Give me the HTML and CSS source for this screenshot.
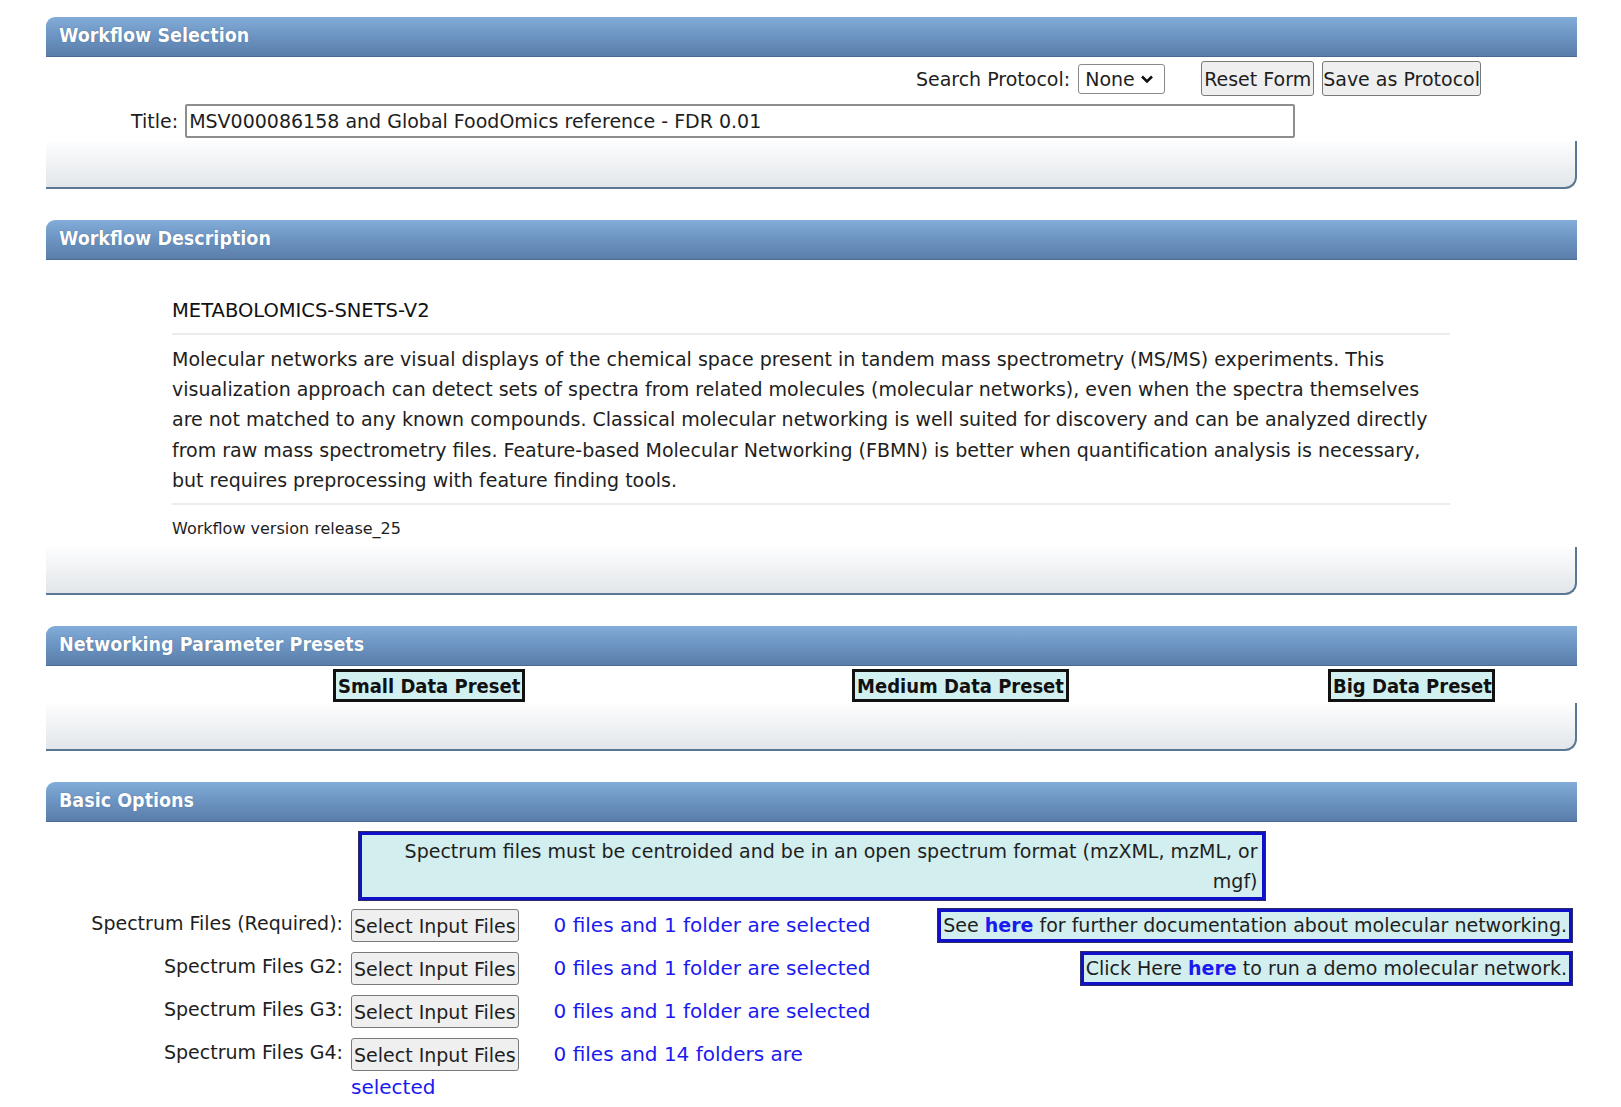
FILE: index.html
```html
<!DOCTYPE html>
<html lang="en">
<head>
<meta charset="utf-8">
<title>Workflow</title>
<link rel="stylesheet" href="styles.css">
</head>
<body>
<div class="page">

  <section class="panel">
    <div class="panel-head">Workflow Selection</div>
    <div class="panel-body sel-body">
      <div class="proto-row">
        <span class="proto-label">Search Protocol:</span>
        <span class="select"><span>None</span><svg width="14" height="10" viewBox="0 0 14 10"><path d="M2 2.5 L7 7.5 L12 2.5" fill="none" stroke="#111" stroke-width="2.6"/></svg></span>
        <button class="btn reset">Reset Form</button>
        <button class="btn save">Save as Protocol</button>
      </div>
      <div class="title-row">
        <span class="title-label">Title:</span>
        <input class="title-input" type="text" value="MSV000086158 and Global FoodOmics reference - FDR 0.01">
      </div>
    </div>
    <div class="panel-foot"></div>
  </section>

  <section class="panel">
    <div class="panel-head">Workflow Description</div>
    <div class="panel-body desc-body">
      <div class="desc-title">METABOLOMICS-SNETS-V2</div>
      <hr class="rule">
      <p class="desc-text">Molecular networks are visual displays of the chemical space present in tandem mass spectrometry (MS/MS) experiments. This visualization approach can detect sets of spectra from related molecules (molecular networks), even when the spectra themselves are not matched to any known compounds. Classical molecular networking is well suited for discovery and can be analyzed directly from raw mass spectrometry files. Feature-based Molecular Networking (FBMN) is better when quantification analysis is necessary, but requires preprocessing with feature finding tools.</p>
      <hr class="rule">
      <div class="desc-version">Workflow version release_25</div>
    </div>
    <div class="panel-foot"></div>
  </section>

  <section class="panel">
    <div class="panel-head">Networking Parameter Presets</div>
    <div class="panel-body preset-body">
      <button class="preset small">Small Data Preset</button>
      <button class="preset medium">Medium Data Preset</button>
      <button class="preset big">Big Data Preset</button>
    </div>
    <div class="panel-foot"></div>
  </section>

  <section class="panel">
    <div class="panel-head">Basic Options</div>
    <div class="panel-body basic-body">
      <div class="notice">Spectrum files must be centroided and be in an open spectrum format (mzXML, mzML, or<br>mgf)</div>
      <div class="file-grid">
        <div class="f-label">Spectrum Files (Required):</div>
        <div class="f-cell"><button class="btn file-btn">Select Input Files</button><span class="f-status">0 files and 1 folder are selected</span></div>
        <div class="f-right"><span class="linkbox">See <b class="here">here</b> for further documentation about molecular networking.</span></div>

        <div class="f-label">Spectrum Files G2:</div>
        <div class="f-cell"><button class="btn file-btn">Select Input Files</button><span class="f-status">0 files and 1 folder are selected</span></div>
        <div class="f-right"><span class="linkbox">Click Here <b class="here">here</b> to run a demo molecular network.</span></div>

        <div class="f-label">Spectrum Files G3:</div>
        <div class="f-cell"><button class="btn file-btn">Select Input Files</button><span class="f-status">0 files and 1 folder are selected</span></div>
        <div class="f-right"></div>

        <div class="f-label">Spectrum Files G4:</div>
        <div class="f-cell"><button class="btn file-btn">Select Input Files</button><span class="f-status">0 files and 14 folders are</span> <span class="f-status">selected</span></div>
        <div class="f-right"></div>
      </div>
    </div>
  </section>

</div>
</body>
</html>
```
FILE: styles.css
```css
* { box-sizing: border-box; }

body {
  margin: 0;
  background: #ffffff;
  font-family: "DejaVu Sans", "Liberation Sans", sans-serif;
  font-size: 19px;
  color: #1e1e1e;
}

.page {
  width: 1531px;
  margin-left: 46px;
  padding-top: 17px;
}

.panel + .panel { margin-top: 31px; }

.panel-head {
  height: 40px;
  background: linear-gradient(#82acd9, #6a91bf 55%, #5a7eaa);
  border-bottom: 1px solid #4a6a93;
  border-top-left-radius: 9px;
  color: #ffffff;
  font-family: "DejaVu Sans Condensed", "DejaVu Sans", sans-serif;
  font-weight: bold;
  font-size: 19.5px;
  line-height: 38px;
  padding-left: 13px;
  text-shadow: 0 0 1px #3a5a82;
}

.panel-body { background: #ffffff; }

.panel-foot {
  height: 48px;
  background: linear-gradient(#fdfdfe, #e2e6ea);
  border-right: 2px solid #5a7794;
  border-bottom: 2px solid #5a7794;
  border-bottom-right-radius: 12px;
}

/* Section 1 */
.sel-body { padding: 4px 0 3px; }

.proto-row {
  display: flex;
  justify-content: flex-end;
  align-items: center;
  padding-right: 96px;
  height: 35px;
}

.proto-label { margin-right: 8px; }

.select {
  display: inline-flex;
  align-items: center;
  justify-content: space-between;
  width: 87px;
  height: 30px;
  padding: 0 10px 0 6px;
  border: 1px solid #8a8a8a;
  border-radius: 3px;
  background: #ffffff;
  margin-right: 36px;
}

.btn {
  font-family: inherit;
  font-size: 19px;
  line-height: normal;
  color: #1e1e1e;
  background: #efefef;
  border: 1px solid #7a7a7a;
  border-radius: 3px;
  padding: 0 2px;
  height: 35px;
}

.save { padding: 0; }

.reset { margin-right: 8px; }

.title-row {
  display: flex;
  align-items: center;
  margin-top: 8px;
  padding-left: 85px;
  height: 34px;
}

.title-label { margin-right: 7px; }

.title-input {
  width: 1110px;
  height: 34px;
  font-family: inherit;
  font-size: 19px;
  color: #1e1e1e;
  border: 2px solid #8d8d8d;
  border-radius: 2px;
  padding: 0 2px;
}

/* Section 2 */
.desc-body { padding: 37px 127px 8px 126px; }

.desc-title {
  font-size: 19.5px;
  line-height: 28px;
  color: #111111;
}

.rule {
  border: 0;
  height: 2px;
  background: #ececec;
  margin: 8px 0 9px;
}

.desc-text {
  margin: 0 0 7px;
  line-height: 30.2px;
}

.desc-version {
  margin-top: 14px;
  font-size: 16px;
  line-height: 20px;
}

/* Section 3 */
.preset-body {
  display: flex;
  padding-top: 3px;
  height: 37px;
}

.preset {
  font-family: "DejaVu Sans Condensed", "DejaVu Sans", sans-serif;
  font-weight: bold;
  font-size: 20px;
  color: #111111;
  background: #d2f0f0;
  border: 3px solid #111111;
  height: 33px;
  padding: 0 2px;
  white-space: nowrap;
}

.preset.small { margin-left: 287px; width: 192px; }
.preset.medium { margin-left: 327px; width: 217px; }
.preset.big { margin-left: 259px; width: 167px; }

/* Section 4 */
.basic-body { padding-top: 10px; }

.notice {
  width: 906px;
  margin: 0 auto;
  background: #d2eeee;
  border: 3px solid #1010c8;
  outline: 1px solid #2a2a6a;
  text-align: right;
  line-height: 30px;
  padding: 1px 4px;
}

.file-grid {
  display: grid;
  grid-template-columns: 297px 530px 1fr;
  column-gap: 8px;
  row-gap: 10px;
  margin-top: 9px;
}

.f-label {
  text-align: right;
  line-height: 28px;
}

.f-cell { line-height: 33px; }

.file-btn {
  height: 33px;
  vertical-align: top;
  margin-right: 35px;
}

.f-status {
  color: #1a1af0;
  font-size: 20px;
}

.f-right {
  text-align: right;
  padding-right: 5px;
}

.linkbox {
  display: inline-block;
  background: #d2eeee;
  border: 3px solid #1010c8;
  outline: 1px solid #2a2a6a;
  height: 33px;
  line-height: 27px;
  padding: 0 2px;
  white-space: nowrap;
}

.here { color: #1a1af0; }
```
